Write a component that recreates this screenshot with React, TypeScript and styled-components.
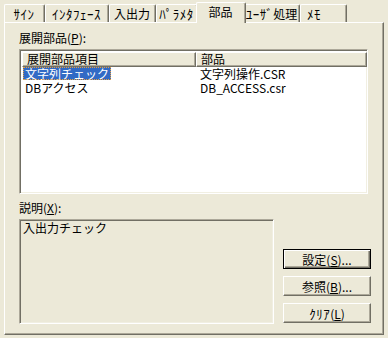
import React from "react";
import styled, { createGlobalStyle } from "styled-components";

const GlobalStyle = createGlobalStyle`
  body {
    margin: 0;
    background: #ece9d8;
    font-family: "Noto Sans CJK JP", "Liberation Sans", sans-serif;
    font-size: 12px;
    color: #000;
  }
`;

const Window = styled.div`
  width: 388px;
  height: 338px;
  padding: 0 4px;
  box-sizing: border-box;
`;

const TabStrip = styled.div`
  display: flex;
  align-items: flex-end;
  height: 22px;
`;

const Tab = styled.div<{ $w: number; $active?: boolean; $left?: boolean }>`
  box-sizing: border-box;
  width: ${(p) => p.$w}px;
  height: ${(p) => (p.$active ? 21 : 18)}px;
  margin: ${(p) => (p.$active ? "0 -2px -1px" : "0")};
  position: relative;
  z-index: ${(p) => (p.$active ? 1 : 0)};
  background: #ece9d8;
  border-top: 1px solid #fff;
  border-left: 1px solid #fff;
  border-right: 1px solid #716f64;
  box-shadow: inset -1px 0 #aca899;
  border-radius: 2px 2px 0 0;
  display: flex;
  justify-content: ${(p) => (p.$left ? "flex-start" : "center")};
  padding: ${(p) => (p.$left ? "1px 0 0 6px" : "1px 1px 0 0")};
  line-height: 15px;
  white-space: nowrap;
`;

const Kana = styled.span`
  font-size: 13px;
  letter-spacing: 0.5px;
`;

const Panel = styled.div`
  box-sizing: border-box;
  width: 380px;
  height: 313px;
  border-top: 1px solid #fff;
  border-left: 1px solid #fff;
  border-right: 1px solid #716f64;
  border-bottom: 1px solid #716f64;
  box-shadow: inset -1px -1px #aca899;
  padding: 8px 0 0 14px;
  display: flex;
  flex-direction: column;
`;

const Label = styled.div`
  line-height: 14px;
  height: 14px;
`;

const Sunken = styled.div<{ $w: number; $h: number }>`
  box-sizing: border-box;
  width: ${(p) => p.$w}px;
  height: ${(p) => p.$h}px;
  background: #fff;
  border-top: 1px solid #aca899;
  border-left: 1px solid #aca899;
  border-right: 1px solid #fff;
  border-bottom: 1px solid #fff;
  box-shadow: inset 1px 1px #716f64, inset -1px -1px #f1efe2;
`;

const ListView = styled(Sunken)`
  margin-top: 4px;
  padding: 2px;
  display: flex;
  flex-direction: column;
`;

const HeaderRow = styled.div`
  display: grid;
  grid-template-columns: 174px 171px;
  height: 15px;
`;

const HeaderCell = styled.div`
  box-sizing: border-box;
  background: #ece9d8;
  border-top: 1px solid #fff;
  border-left: 1px solid #fff;
  border-right: 1px solid #716f64;
  border-bottom: 1px solid #716f64;
  box-shadow: inset -1px -1px #aca899;
  padding-left: 4px;
  line-height: 12px;
  white-space: nowrap;
`;

const Row = styled.div`
  display: grid;
  grid-template-columns: 174px 171px;
  height: 14px;
  line-height: 14px;
`;

const Cell = styled.div<{ $selected?: boolean }>`
  padding-left: 1px;
  white-space: nowrap;
  span {
    display: inline-block;
    padding: 0 2px;
    line-height: 13px;
    background: ${(p) => (p.$selected ? "#316ac5" : "transparent")};
    color: ${(p) => (p.$selected ? "#fff" : "#000")};
    outline: ${(p) => (p.$selected ? "1px dotted #e8a040" : "none")};
    outline-offset: -1px;
  }
`;

const SecondCell = styled.div`
  padding-left: 4px;
  white-space: nowrap;
`;

const DescLabel = styled(Label)`
  margin-top: 7px;
`;

const Bottom = styled.div`
  display: flex;
  gap: 9px;
  margin-top: 4px;
`;

const DescBox = styled(Sunken)`
  background: #ece9d8;
  padding: 1px 3px;
  line-height: 14px;
`;

const Buttons = styled.div`
  display: flex;
  flex-direction: column;
  justify-content: flex-end;
  gap: 7px;
  padding-bottom: 1px;
`;

const Button = styled.div<{ $default?: boolean }>`
  box-sizing: border-box;
  width: 88px;
  height: 20px;
  display: flex;
  align-items: center;
  justify-content: center;
  background: #ece9d8;
  white-space: nowrap;
  border-style: solid;
  border-width: 1px;
  border-color: ${(p) => (p.$default ? "#000" : "#fff #716f64 #716f64 #fff")};
  box-shadow: ${(p) =>
    p.$default
      ? "inset 1px 1px #fff, inset -1px -1px #716f64, inset -2px -2px #aca899"
      : "inset -1px -1px #aca899"};
`;

const tabs = [
  { label: "ｻｲﾝ", w: 41, kana: true },
  { label: "ｲﾝﾀﾌｪｰｽ", w: 64, kana: true },
  { label: "入出力", w: 47 },
  { label: "ﾊﾟﾗﾒﾀ", w: 42, kana: true },
  { label: "部品", w: 50, active: true },
  { label: "ﾕｰｻﾞ", suffix: "処理", w: 56, kana: true },
  { label: "ﾒﾓ", w: 47, kana: true, left: true },
];

const rows = [
  { item: "文字列チェック", part: "文字列操作.CSR", selected: true },
  { item: "DBアクセス", part: "DB_ACCESS.csr" },
];

export default function App() {
  return (
    <Window>
      <GlobalStyle />
      <TabStrip>
        {tabs.map((t) => (
          <Tab key={t.label} $w={t.w} $active={t.active} $left={t.left}>
            {t.kana ? <Kana>{t.label}</Kana> : t.label}
            {t.suffix}
          </Tab>
        ))}
      </TabStrip>
      <Panel>
        <Label>
          展開部品(<u>P</u>):
        </Label>
        <ListView $w={349} $h={145}>
          <HeaderRow>
            <HeaderCell>展開部品項目</HeaderCell>
            <HeaderCell>部品</HeaderCell>
          </HeaderRow>
          {rows.map((r) => (
            <Row key={r.item}>
              <Cell $selected={r.selected}>
                <span>{r.item}</span>
              </Cell>
              <SecondCell>{r.part}</SecondCell>
            </Row>
          ))}
        </ListView>
        <DescLabel>
          説明(<u>X</u>):
        </DescLabel>
        <Bottom>
          <DescBox $w={255} $h={105}>入出力チェック</DescBox>
          <Buttons>
            <Button $default>
              設定(<u>S</u>)...
            </Button>
            <Button>
              参照(<u>B</u>)...
            </Button>
            <Button>
              <Kana>ｸﾘｱ</Kana>(<u>L</u>)
            </Button>
          </Buttons>
        </Bottom>
      </Panel>
    </Window>
  );
}
